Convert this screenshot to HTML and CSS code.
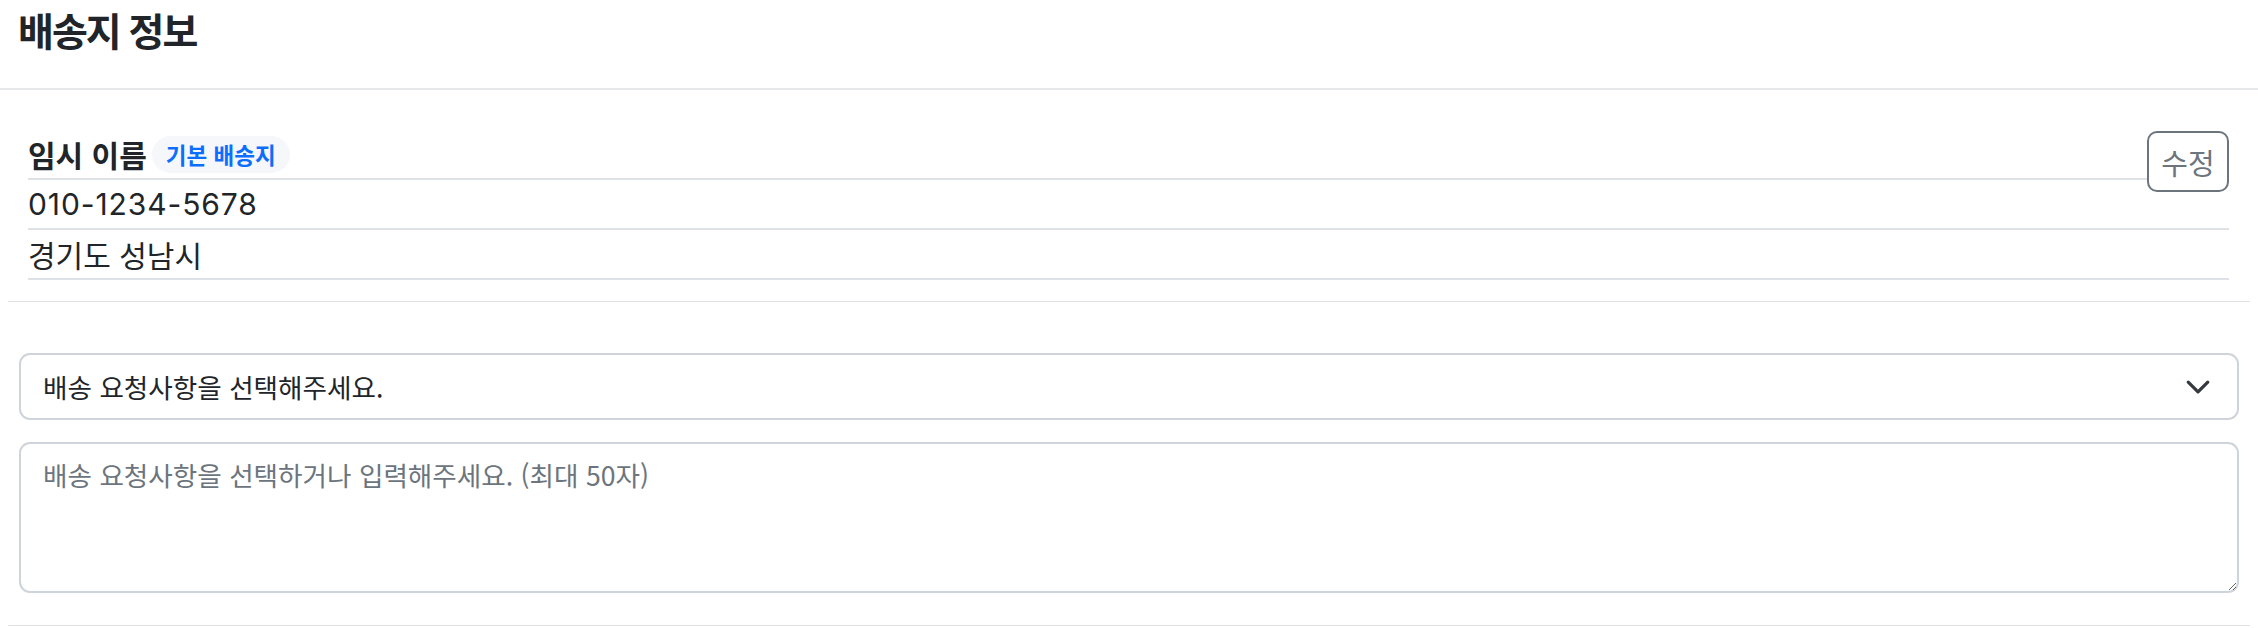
FILE: index.html
```html
<!DOCTYPE html>
<html lang="ko">
<head>
<meta charset="utf-8">
<title>배송지 정보</title>
<link rel="stylesheet" href="styles.css">
</head>
<body>
<header class="head">
  <h2 class="title">배송지 정보</h2>
</header>
<section class="addr">
  <div class="row row-name"><strong class="name">임시 이름</strong><span class="badge">기본 배송지</span></div>
  <div class="row phone">010-1234-5678</div>
  <div class="row">경기도 성남시</div>
  <button class="edit" type="button">수정</button>
</section>
<section class="request">
  <div class="select-wrap">
    <select class="select">
      <option>배송 요청사항을 선택해주세요.</option>
    </select>
    <svg class="chev" viewBox="0 0 16 16" aria-hidden="true"><path fill="none" stroke="#343a40" stroke-linecap="round" stroke-linejoin="round" stroke-width="2" d="m2 5 6 6 6-6"/></svg>
  </div>
  <textarea class="memo" placeholder="배송 요청사항을 선택하거나 입력해주세요. (최대 50자)"></textarea>
</section>
</body>
</html>
```
FILE: styles.css
```css
* { box-sizing: border-box; }
body {
  margin: 0;
  font-family: Inter, "Noto Sans CJK KR", sans-serif;
  color: #212529;
  background: #fff;
}
.head {
  height: 90px;
  padding: 3px 18px 0;
  border-bottom: 2px solid #e6e8ea;
}
.title {
  margin: 0;
  font-size: 39px;
  font-weight: 700;
  letter-spacing: -2px;
  line-height: 52px;
  font-family: "Noto Sans CJK KR", sans-serif;
}
.addr {
  position: relative;
  margin: 0 8px;
  padding: 40px 21px 21px 20px;
  border-bottom: 1px solid #dee2e6;
}
.row {
  height: 50px;
  display: flex;
  align-items: center;
  border-bottom: 2px solid #dee2e6;
  font-size: 30px;
}
.phone {
  letter-spacing: 0.9px;
}
.name {
  font-weight: 700;
  font-family: "Noto Sans CJK KR", sans-serif;
}
.badge {
  margin-left: 5px;
  height: 37px;
  padding: 0 14px;
  display: inline-flex;
  align-items: center;
  border-radius: 19px;
  background: #f5f7fa;
  color: #0d6efd;
  font-size: 22.5px;
  font-weight: 700;
  font-family: "Noto Sans CJK KR", sans-serif;
}
.edit {
  position: absolute;
  top: 41px;
  right: 21px;
  width: 82px;
  height: 61px;
  padding: 0;
  border: 2px solid #6c757d;
  border-radius: 10px;
  background: #fff;
  color: #6c757d;
  font-family: "Noto Sans CJK KR", sans-serif;
  font-size: 29px;
}
.request {
  margin: 0 8px;
  padding: 51px 11px 32px;
  display: flex;
  flex-direction: column;
  gap: 22px;
  border-bottom: 1px solid #dee2e6;
}
.select-wrap {
  position: relative;
}
.select {
  appearance: none;
  -webkit-appearance: none;
  display: block;
  width: 100%;
  height: 67px;
  margin: 0;
  padding: 0 70px 0 22px;
  border: 2px solid #ced4da;
  border-radius: 11px;
  background: #fff;
  color: #212529;
  font-family: "Noto Sans CJK KR", sans-serif;
  font-size: 26.6px;
}
.chev {
  position: absolute;
  right: 28px;
  top: 50%;
  width: 26px;
  height: 26px;
  transform: translateY(-50%);
  pointer-events: none;
}
.memo {
  display: block;
  width: 100%;
  height: 151px;
  margin: 0;
  padding: 11px 22px;
  border: 2px solid #ced4da;
  border-radius: 11px;
  color: #212529;
  font-family: "Noto Sans CJK KR", sans-serif;
  font-size: 26.6px;
  line-height: 1.5;
  resize: vertical;
}
.memo::placeholder {
  color: #6c757d;
  opacity: 1;
}
```
